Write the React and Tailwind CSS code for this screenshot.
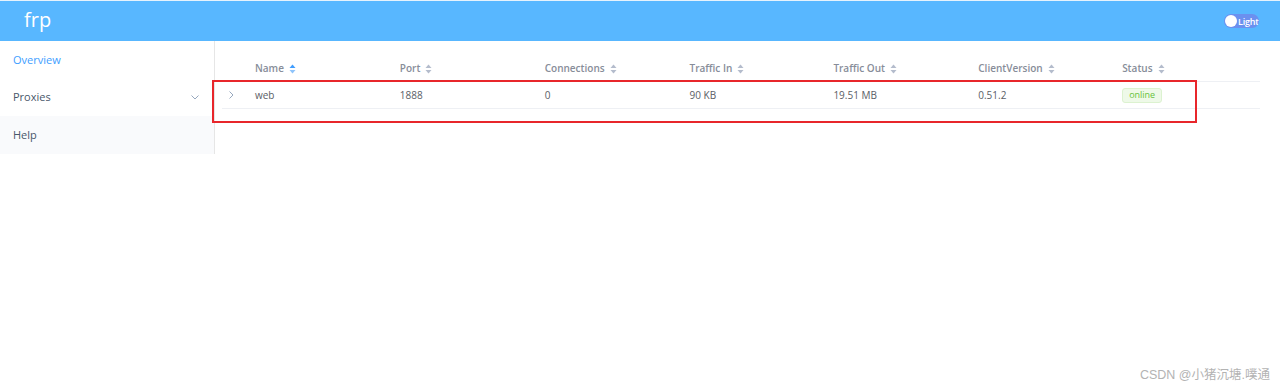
import React from "react";

const cols = [
  { label: "Name", w: "w-[145px]", active: true },
  { label: "Port", w: "w-[145px]" },
  { label: "Connections", w: "w-[145px]" },
  { label: "Traffic In", w: "w-[144px]" },
  { label: "Traffic Out", w: "w-[145px]" },
  { label: "ClientVersion", w: "w-[144px]" },
  { label: "Status", w: "w-[138px]" },
];

function Sort({ active }) {
  return (
    <svg width="7" height="10" viewBox="0 0 7 10" className="ml-[5px] inline-block">
      <path d="M3.5 0.5 L6.5 4 L0.5 4 Z" fill={active ? "#409eff" : "#b4bccc"} />
      <path d="M3.5 9.5 L6.5 6 L0.5 6 Z" fill={active ? "#8fc4fb" : "#b4bccc"} />
    </svg>
  );
}

export default function App() {
  return (
    <div className="w-[1280px] h-[391px] bg-white relative overflow-hidden" style={{ fontFamily: '"Open Sans","Noto Sans","Noto Sans CJK SC",sans-serif' }}>
      <div className="h-[1px] bg-[#e6f2fc]" />
      <header className="h-[40px] bg-[#58b7ff] flex items-center justify-between pl-[24px] pr-[21px]">
        <span className="text-white text-[20px] leading-none -mt-[3px]">frp</span>
        <div className="flex items-center w-[35px] h-[14px] rounded-full bg-[#6b90ef] overflow-hidden">
          <span className="w-[12px] h-[12px] shrink-0 rounded-full bg-white ml-[1px]" />
          <span className="text-white text-[9px] font-semibold leading-none ml-[1px] tracking-[-0.2px]">Light</span>
        </div>
      </header>
      <div className="flex">
        <aside className="w-[215px] h-[113px] border-r border-[#e6e6e6] flex flex-col text-[11px]">
          <div className="h-[38px] flex items-center pl-[13px] text-[#409eff]">Overview</div>
          <div className="h-[37px] flex items-center justify-between pl-[13px] pr-[15px] text-[#48576a]">
            <span>Proxies</span>
            <svg width="8" height="5" viewBox="0 0 8 5"><path d="M0.5 0.5 L4 4 L7.5 0.5" fill="none" stroke="#97a8be" strokeWidth="1" /></svg>
          </div>
          <div className="h-[38px] flex items-center pl-[13px] text-[#48576a] bg-[#f9fafc]">Help</div>
        </aside>
        <main className="flex-1 pl-[7px] pr-[20px] pt-[15px]">
          <div className="w-[1038px]">
            <div className="flex h-[26px] items-center border-b border-[#eef0f4] text-[10px] font-semibold text-[#878d99]">
              <div className="w-[33px]" />
              {cols.map((c) => (
                <div key={c.label} className={`${c.w} flex items-center`}>
                  <span>{c.label}</span>
                  <Sort active={c.active} />
                </div>
              ))}
            </div>
            <div className="flex h-[27px] items-center border-b border-[#eef0f4] text-[10px] text-[#5a5e66]">
              <div className="w-[33px] pl-[7px] text-[#97a8be]">
                <svg width="5" height="8" viewBox="0 0 5 8"><path d="M0.5 0.5 L4 4 L0.5 7.5" fill="none" stroke="#97a8be" strokeWidth="1" /></svg>
              </div>
              <div className="w-[145px]">web</div>
              <div className="w-[145px]">1888</div>
              <div className="w-[145px]">0</div>
              <div className="w-[144px]">90 KB</div>
              <div className="w-[145px]">19.51 MB</div>
              <div className="w-[144px]">0.51.2</div>
              <div className="w-[138px]">
                <span className="inline-flex items-center h-[15px] px-[6px] rounded-[3px] bg-[#eef9e8] border border-[#dcf2d0] text-[#67c23a] text-[9px]">online</span>
              </div>
            </div>
          </div>
        </main>
      </div>
      <div className="absolute left-[212px] top-[80px] w-[985px] h-[43px] border-2 border-[#e8262b]" />
      <div className="absolute right-[10px] bottom-[6px] text-[12.5px] text-[#b3b3b3]" style={{ fontFamily: '"Liberation Sans","Noto Sans CJK SC",sans-serif' }}>CSDN @小猪沉塘.噗通</div>
    </div>
  );
}
